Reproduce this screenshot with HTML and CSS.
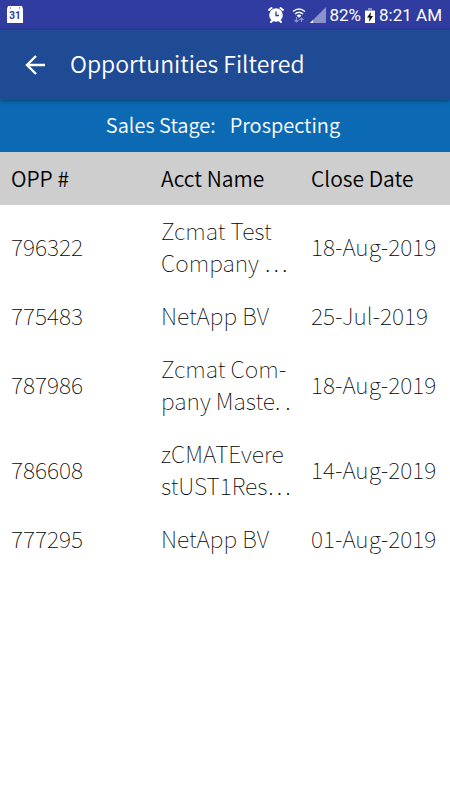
FILE: index.html
```html
<!DOCTYPE html>
<html lang="en">
<head>
    <meta charset="UTF-8">
    <meta name="viewport" content="width=device-width, initial-scale=1.0">
    <title>Opportunities Filtered</title>
    <link rel="stylesheet" href="styles.css">
</head>
<body>
    <div class="status-bar">
        <svg class="calendar" width="18" height="18" viewBox="0 0 18 18">
            <path d="M2 0h14l1 3v14H1V3z" fill="#fff"/>
            <path d="M4 2h1M13 2h1" stroke="#303c9f" stroke-width="1"/>
            <text x="9" y="13" text-anchor="middle">31</text>
        </svg>
        <div class="status-right">
            <svg class="alarm" width="16" height="16" viewBox="0 0 16 16">
                <circle cx="8" cy="8" r="6.8" fill="#fff"/>
                <path d="M1 3L3.5 1M12.5 1L15 3M3 15l2-2M13 15l-2-2" stroke="#fff" stroke-width="2" stroke-linecap="round"/>
                <path d="M8 4.5V8.5H11" fill="none" stroke="#303c9f" stroke-width="1.3"/>
            </svg>
            <svg width="14" height="16" viewBox="0 0 14 16">
                <path d="M1 4.5Q7-.5 13 4.5M3 7Q7 3.5 11 7M5 9Q7 7.5 9 9" fill="none" stroke="#fff" stroke-width="1.4"/>
                <path d="M5.5 9h3L7 11z" fill="#fff"/>
                <path d="M4.5 10v5M2.5 13l2 2 2-2M9.5 15v-4M7.5 13l2-2 2 2" fill="none" stroke="#8c92cb" stroke-width="1.2"/>
            </svg>
            <svg width="16" height="16" viewBox="0 0 16 16">
                <path d="M16 0v16H0z" fill="#8c92cb"/>
                <path d="M3 13v3H0z" fill="#fff"/>
            </svg>
            <span>82%</span>
            <svg width="10" height="15" viewBox="0 0 10 15">
                <path d="M3 0h4v2h3v2H0V2h3z" fill="#8c92cb"/>
                <path d="M0 3h10v12H0z" fill="#fff"/>
                <path d="M6 4L2 9.5h2.5L4 14l4-6H5.5z" fill="#111"/>
            </svg>
            <span>8:21 AM</span>
        </div>
    </div>

    <header class="toolbar">
        <button class="back" type="button" aria-label="Back">
            <svg width="20" height="20" viewBox="0 0 20 20">
                <path d="M20 10H2M11 1L2 10l9 9" fill="none" stroke="#fff" stroke-width="2.4"/>
            </svg>
        </button>
        <h1>Opportunities Filtered</h1>
    </header>

    <div class="stage">
        <span>Sales Stage:</span>
        <span>Prospecting</span>
    </div>

    <table class="opportunities">
        <thead>
            <tr>
                <th>OPP #</th>
                <th>Acct Name</th>
                <th>Close Date</th>
            </tr>
        </thead>
        <tbody>
            <tr>
                <td>796322</td>
                <td>Zcmat Test<br>Company …</td>
                <td>18-Aug-2019</td>
            </tr>
            <tr>
                <td>775483</td>
                <td>NetApp BV</td>
                <td>25-Jul-2019</td>
            </tr>
            <tr>
                <td>787986</td>
                <td>Zcmat Com-<br>pany Maste. .</td>
                <td>18-Aug-2019</td>
            </tr>
            <tr>
                <td>786608</td>
                <td>zCMATEvere<br>stUST1Res…</td>
                <td>14-Aug-2019</td>
            </tr>
            <tr>
                <td>777295</td>
                <td>NetApp BV</td>
                <td>01-Aug-2019</td>
            </tr>
        </tbody>
    </table>
</body>
</html>
```
FILE: styles.css
```css
body {
    margin: 0;
    background-color: #fff;
    color: #000;
    font-family: "Noto Sans CJK SC", "Noto Sans", sans-serif;
    font-size: 21px;
    font-weight: 350;
}

.status-bar {
    display: flex;
    align-items: center;
    justify-content: space-between;
    height: 30px;
    padding: 0 8px 0 6px;
    background-color: #303c9f;
    color: #fff;
    font-family: Roboto, sans-serif;
    font-size: 17px;
    font-weight: 400;
}

.calendar text {
    fill: #303c9f;
    font-size: 10px;
    font-weight: 700;
}

.status-right {
    display: flex;
    align-items: center;
    gap: 4px;
}

.alarm {
    margin-right: 4px;
}

.toolbar {
    position: relative;
    display: flex;
    align-items: center;
    gap: 25px;
    height: 70px;
    padding: 0 25px;
    background-color: #1f4a94;
    color: #fff;
    box-shadow: 0 1px 4px rgba(0, 0, 0, 0.4);
}

.back {
    display: flex;
    padding: 0;
    border: none;
    background: none;
    cursor: pointer;
}

h1 {
    margin: 0;
    padding-bottom: 4px;
    font-size: 23px;
    font-weight: 350;
}

.stage {
    display: flex;
    align-items: center;
    justify-content: center;
    gap: 14px;
    padding: 9px 4px 11px 0;
    background-color: #0c6ab5;
    color: #fff;
    font-size: 20px;
    line-height: 32px;
}

.opportunities {
    width: 100%;
    table-layout: fixed;
    border-collapse: collapse;
    line-height: 32px;
}

th,
td {
    padding: 10px 0 11px 11px;
    text-align: left;
    white-space: nowrap;
}

th {
    background-color: #cecece;
    font-weight: 350;
}

td {
    padding-top: 9px;
    padding-bottom: 12px;
    font-size: 23px;
    font-weight: 100;
}
```
